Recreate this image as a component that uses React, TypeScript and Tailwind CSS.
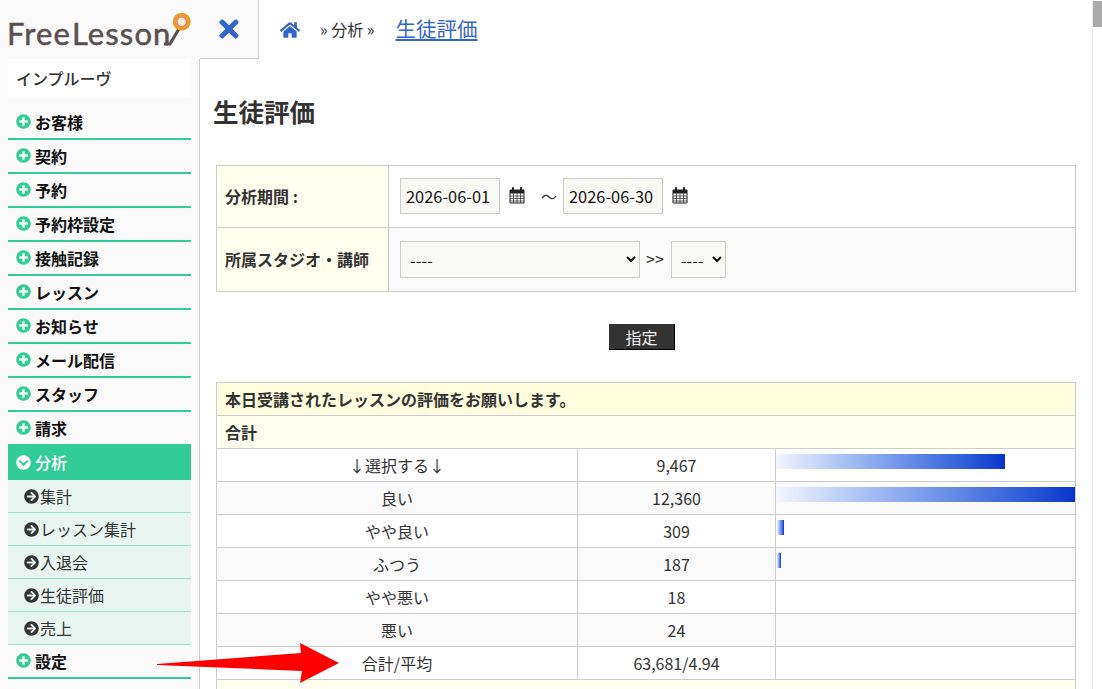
import { FaArrowCircleRight, FaChevronCircleDown, FaHome, FaPlusCircle, FaTimes } from "react-icons/fa";

const menuTop = ["お客様", "契約", "予約", "予約枠設定", "接触記録", "レッスン", "お知らせ", "メール配信", "スタッフ", "請求"];
const subMenu = ["集計", "レッスン集計", "入退会", "生徒評価", "売上"];

const rows = [
  { label: "↓選択する↓", count: "9,467", bar: 229 },
  { label: "良い", count: "12,360", bar: 299 },
  { label: "やや良い", count: "309", bar: 7 },
  { label: "ふつう", count: "187", bar: 4 },
  { label: "やや悪い", count: "18", bar: 0 },
  { label: "悪い", count: "24", bar: 0 },
  { label: "合計/平均", count: "63,681/4.94", bar: 0 },
];

const CalendarIcon = () => (
  <svg width="16" height="17" viewBox="0 0 16 17" className="shrink-0" aria-hidden="true">
    <path d="M1 3h14v13H1z" fill="#fff" stroke="#222" />
    <path d="M1 3h14v3.5H1z" fill="#222" />
    <path d="M4 1v3M12 1v3" stroke="#222" strokeWidth="2" strokeLinecap="round" />
    <path d="M1 9h14M1 11.5h14M1 14h14M4.5 6v10M8 6v10M11.5 6v10" stroke="#222" strokeWidth="0.7" />
  </svg>
);

const Logo = () => (
  <div className="relative h-[59px] w-[199px] shrink-0 overflow-hidden">
    <span className="absolute left-[7px] top-[13px] font-['Lato',sans-serif] text-[31px] leading-[40px] tracking-[1.1px] text-[#5b5050] [-webkit-text-stroke:0.5px_#5b5050]">
      Free<span className="ml-[1px]">Lesson</span>
    </span>
    <svg width="40" height="40" viewBox="0 0 40 40" className="absolute left-[155px] top-[8px]" aria-hidden="true">
      <path d="M9 36 L15 36 L25 19" fill="none" stroke="#5b5050" strokeWidth="3.2" />
      <circle cx="26.7" cy="13.7" r="7.2" fill="#fbeecf" stroke="#ee9a2c" strokeWidth="3.6" />
      <circle cx="26.7" cy="13.7" r="4.8" fill="none" stroke="#d9716f" strokeWidth="1.2" />
    </svg>
  </div>
);

const Sidebar = () => (
  <aside className="flex w-[200px] flex-1 flex-col border-r border-[#ccc] bg-[#fafafa]">
    <div className="mx-2 mb-[8px] h-[39px] bg-white pl-2 text-[16px] font-medium leading-[38px] text-[#333]">インプルーヴ</div>
    <ul className="mx-2">
      {menuTop.map((name) => (
        <li key={name} className="flex h-[34px] items-center gap-[4px] border-b-2 border-[#33cc99] pb-[1px] pl-2 text-[16px] font-bold text-[#111]">
          <FaPlusCircle className="size-[15px] text-[#33cc99]" />
          {name}
        </li>
      ))}
      <li className="-mt-[2px] flex h-[36px] items-center gap-[4px] bg-[#33cc99] pl-2 text-[16px] font-medium text-white">
        <FaChevronCircleDown className="size-[15px]" />
        分析
      </li>
      {subMenu.map((name) => (
        <li key={name} className="flex h-[33px] items-center gap-[1px] border-b border-[#99e0c8] bg-[#e9f5f1] pl-4 text-[16px] text-[#333]">
          <FaArrowCircleRight className="size-[15px] text-[#333]" />
          {name}
        </li>
      ))}
      <li className="flex h-[34px] items-center gap-[4px] border-b-2 border-[#33cc99] pb-[1px] pl-2 text-[16px] font-bold text-[#111]">
        <FaPlusCircle className="size-[15px] text-[#33cc99]" />
        設定
      </li>
    </ul>
  </aside>
);

const fieldClass = "h-[36px] border border-[#ccc] bg-[#f9f9f6] text-[16.4px] text-[#111]";

const FilterTable = () => (
  <table className="w-[860px] border-collapse text-[16px] text-[#333]">
    <tbody>
      <tr className="h-[62px]">
        <th className="w-[172px] border border-[#ccc] bg-[#ffffef] pb-[2px] pl-2 text-left font-bold">分析期間 :</th>
        <td className="border border-[#ccc] pb-[2px] pl-[11px]">
          <div className="flex items-center">
            <input readOnly value="2026-06-01" className={`${fieldClass} w-[100px] pl-[5px]`} />
            <span className="ml-[9px]"><CalendarIcon /></span>
            <span className="ml-[16px] mr-[6px] text-[#333]">〜</span>
            <input readOnly value="2026-06-30" className={`${fieldClass} w-[100px] pl-[5px]`} />
            <span className="ml-[9px]"><CalendarIcon /></span>
          </div>
        </td>
      </tr>
      <tr className="h-[64px] bg-[#fafafa]">
        <th className="border border-[#ccc] bg-[#ffffef] pb-[2px] pl-2 text-left font-bold">所属スタジオ・講師</th>
        <td className="border border-[#ccc] pl-[11px]">
          <div className="flex items-center">
            <select className={`${fieldClass} h-[37px] w-[240px] pl-[5px]`}>
              <option>----</option>
            </select>
            <span className="ml-[6px] mr-[7px] mb-[4px] text-[16px] leading-[20px]">&gt;&gt;</span>
            <select className={`${fieldClass} h-[37px] w-[55px] pl-[5px]`}>
              <option>----</option>
            </select>
          </div>
        </td>
      </tr>
    </tbody>
  </table>
);

const ResultTable = () => (
  <table className="w-[860px] table-fixed border-collapse text-[16px] text-[#333]">
    <colgroup>
      <col className="w-[361px]" />
      <col className="w-[198px]" />
      <col />
    </colgroup>
    <tbody>
      <tr className="h-[33px]">
        <th colSpan={3} className="border border-[#ccc] bg-[#ffffe0] pl-2 text-left font-bold">本日受講されたレッスンの評価をお願いします。</th>
      </tr>
      <tr className="h-[33px]">
        <th colSpan={3} className="border border-[#ccc] bg-[#ffffef] pl-2 text-left font-bold">合計</th>
      </tr>
      {rows.map((row, i) => (
        <tr key={row.label} className={`h-[33px] ${i % 2 === 1 ? "bg-[#fafafa]" : "bg-white"}`}>
          <td className="border border-[#ccc] text-center">{row.label}</td>
          <td className="border border-[#ccc] text-center">{row.count}</td>
          <td className="h-[33px] border border-[#ccc] p-0 align-top">
            {row.bar > 0 && (
              <div
                className="mt-[5px] h-[15px] bg-gradient-to-r from-[#f4f5ff] to-[#0a33cc]"
                style={{ width: row.bar, marginLeft: row.bar < 10 ? 1 : 0 }}
              />
            )}
          </td>
        </tr>
      ))}
      <tr className="h-[33px]">
        <td colSpan={3} className="border border-[#ccc] bg-[#ffffef]" />
      </tr>
    </tbody>
  </table>
);

export default function App() {
  return (
    <div className="flex h-[689px] w-[1102px] overflow-hidden bg-white font-['Noto_Sans_CJK_JP','Noto_Sans',sans-serif]">
      <div className="relative flex min-w-0 flex-1">
        <div className="flex w-[200px] shrink-0 flex-col">
          <div className="bg-[#fafafa]">
            <Logo />
          </div>
          <Sidebar />
        </div>
        <main className="min-w-0 flex-1">
          <header className="flex h-[59px] items-center">
            <div className="flex h-[59px] w-[59px] items-center justify-center border-b border-r border-[#ccc] bg-[#fafafa]">
              <FaTimes className="size-[28px] text-[#3366cc]" />
            </div>
            <FaHome className="ml-[21px] size-[20px] text-[#3366cc]" />
            <span className="mb-[1px] ml-[20px] text-[16px] text-[#333]">» 分析 »</span>
            <a className="mb-[2px] ml-[21px] text-[20.5px] text-[#3366cc] underline">生徒評価</a>
          </header>
          <div className="pl-[16px]">
            <h1 className="ml-[-3px] mt-[33px] text-[25.5px] font-bold leading-[38px] text-[#333]">生徒評価</h1>
            <div className="mt-[35px]">
              <FilterTable />
            </div>
            <div className="mt-[32px] flex w-[860px] justify-center pr-[8px]">
              <button className="h-[26px] w-[66px] border-b border-r border-black bg-[#333] text-[16px] text-[#eee]">指定</button>
            </div>
            <div className="mt-[32px]">
              <ResultTable />
            </div>
          </div>
        </main>
        <svg width="190" height="46" viewBox="0 0 190 46" className="absolute left-[156px] top-[641px]" aria-hidden="true">
          <path d="M1 23 L145 12 L144 2 L183 22 L144 42 L146 30 L1 24 Z" fill="#ff0000" />
        </svg>
      </div>
      <div className="flex w-[10px] shrink-0 flex-col border-l border-[#eee] bg-white pt-[1px]">
        <div className="h-[26px] bg-[#aaa]" />
      </div>
    </div>
  );
}
